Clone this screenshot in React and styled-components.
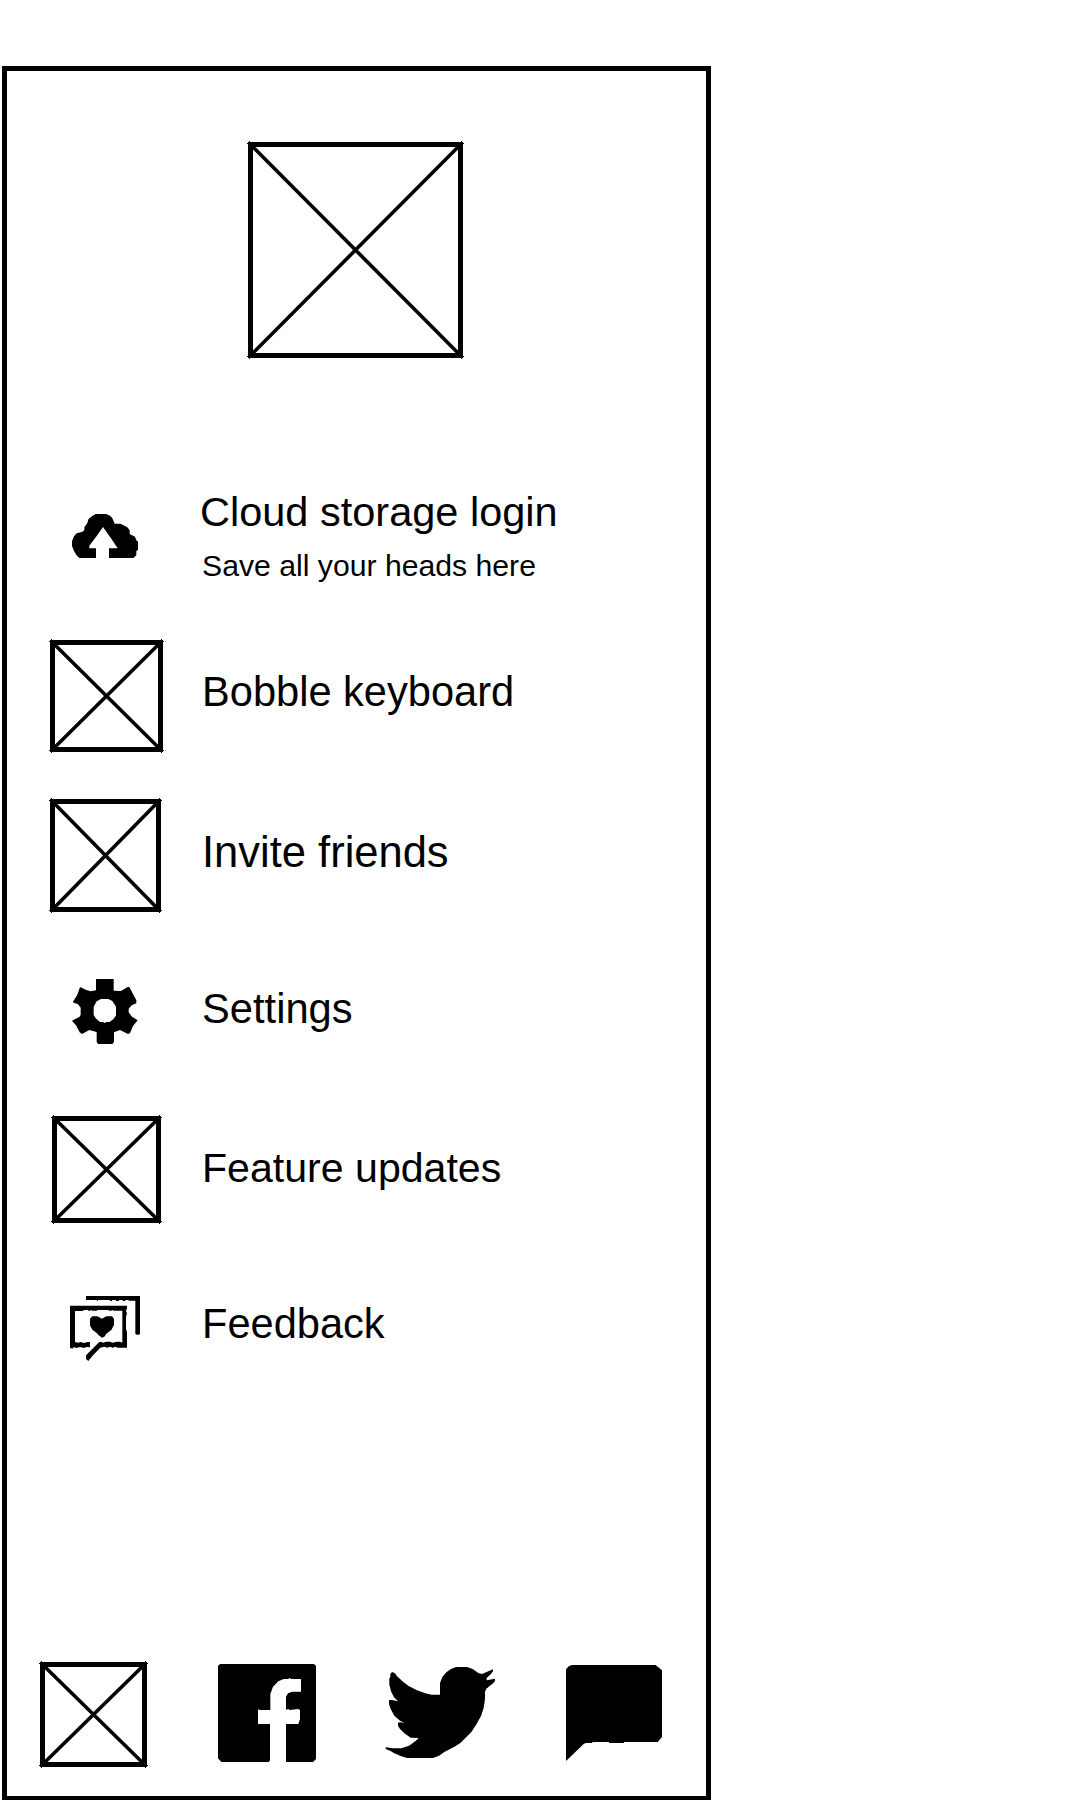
import React from "react";
import styled, { createGlobalStyle } from "styled-components";

const GlobalStyle = createGlobalStyle`
  html, body { margin: 0; background: #fff; }
  body { height: 1800px; overflow: hidden; }
`;

const Page = styled.main`
  box-sizing: border-box;
  height: 1800px;
  padding: 66px 0 0 2px;
  background: #fff;
  color: #000;
  font-family: "Liberation Sans", Arial, sans-serif;
`;

const Drawer = styled.section`
  box-sizing: border-box;
  display: flex;
  flex-direction: column;
  width: 709px;
  height: 1734px;
  border: 5px solid #000;
  border-bottom-width: 4px;
`;

const Hero = styled.header`
  padding: 71px 0 0 241px;
  height: 334px;
`;

const Menu = styled.nav`
  display: flex;
  flex-direction: column;
`;

const MenuRow = styled.div`
  display: grid;
  grid-template-columns: 190px 1fr;
  align-items: start;
  height: 120px;
  margin-bottom: ${(p) => p.$gap}px;
`;

const IconCell = styled.div`
  padding: ${(p) => p.$top}px 0 0 ${(p) => p.$left}px;
`;

const Labels = styled.div`
  padding: ${(p) => p.$top}px 0 0 ${(p) => p.$left}px;
`;

const Title = styled.div`
  font-size: ${(p) => p.$size}px;
  line-height: 48px;
  white-space: nowrap;
`;

const Subtitle = styled.div`
  margin: 6px 0 0 2px;
  font-size: 30.2px;
  line-height: 48px;
  white-space: nowrap;
`;

const Footer = styled.footer`
  display: flex;
  align-items: flex-start;
  margin-top: auto;
  height: 134px;
  padding-left: 33px;
`;

const FooterItem = styled.div`
  padding-top: ${(p) => p.$top}px;
  margin-right: ${(p) => p.$gap}px;
`;

const Drawing = styled.svg`
  display: block;
  overflow: visible;
  shape-rendering: ${(p) => (p.$smooth ? "geometricPrecision" : "crispEdges")};
`;

const Cross = styled.path`
  shape-rendering: geometricPrecision;
  stroke-width: 3.6px;
`;

function Placeholder({ w, h }) {
  return (
    <Drawing width={w} height={h} viewBox={`0 0 ${w} ${h}`} fill="none" stroke="#000">
      <rect x="2.5" y="2.5" width={w - 5} height={h - 5} strokeWidth="5" />
      <Cross d={`M2 2L${w - 2} ${h - 2}M${w - 2} 2L2 ${h - 2}`} />
      <path
        d={`M-1 1.5H2M1.5 -1V2M${w - 2} 1.5H${w + 1}M${w - 1.5} -1V2M-1 ${h - 1.5}H2M1.5 ${h - 2}V${h + 1}M${w - 2} ${h - 1.5}H${w + 1}M${w - 1.5} ${h - 2}V${h + 1}`}
        strokeWidth="1"
      />
    </Drawing>
  );
}

const CloudIcon = () => (
  <Drawing $smooth width="66" height="44" viewBox="36 42 198 132">
    <path d="M58 174L49 165L42 153L36 138V123L42 109L50 100L66 96L73 91V82L82 69L86 56L98 47L107 42H139L151 48L157 55L164 71H182L202 82L209 91V102L225 110L229 121L234 125V150L229 153V166L220 174H147V145H173L154 116L129 81L110 108L88 137V145H108V174Z" />
  </Drawing>
);

const GearIcon = () => (
  <Drawing $smooth width="66" height="65" viewBox="96 57 198 195">
    <path
      fillRule="evenodd"
      d="M168 57H221V92L243 93L263 81H268L289 121V130L275 136L266 146V157L276 170L293 181L279 198L270 219L264 222L240 210L222 217V246L217 252H174L170 246V216L148 210L126 222L119 217L109 197L96 182L119 170L122 164V143L114 133L98 127L112 104L120 81L139 90L152 94L168 91ZM183 117L170 124L161 140V165L167 175L180 186H189L194 189L199 186H208L220 178L228 166V140L217 123L205 117Z"
    />
  </Drawing>
);

const FeedbackIcon = () => (
  <Drawing $smooth width="70" height="65" viewBox="30 33 210 195">
    <path d="M78 33H240V147L233 150L226 147V47H206V45H196V48H188V45H177V48H168V45H156V48H150V45H114V48H111V45H78Z" />
    <path d="M30 62H201V70L198 78L201 86L198 93V133L201 140V188H172L167 185L158 188L150 185L141 188L134 185L121 188L99 211L85 228L78 222V211L117 172L123 170L129 173L138 170H150L158 173L171 170H180L187 173V77H161L157 75L151 78L144 75H111V77H97L93 75L88 78L82 75H73L67 78H45V171L54 173L62 171L71 174L84 171H90V187L79 186L72 189L60 186L48 189L42 186L37 191L30 188Z" />
    <path d="M97 94H112L126 101L139 94H156L162 101V120L154 135L139 146L133 155L126 158L116 151L111 145L98 135L90 122V101Z" />
  </Drawing>
);

const FacebookIcon = () => (
  <Drawing $smooth width="98" height="98" viewBox="54 42 294 294">
    <path d="M60 42H342L348 48V327L339 336H258V222H295L300 207V180L294 177L270 180L264 177L258 180V140L264 130L276 125H303V87H274L269 84L265 87H251L235 94L219 110L211 132V180H180L174 178V222H210V331L206 336H64L54 325V48Z" />
  </Drawing>
);

const TwitterIcon = () => (
  <Drawing $smooth width="109" height="91" viewBox="48 51 327 273">
    <path d="M66 66L75 70L81 79L100 96L116 108L141 121L166 130L185 134H210V99L217 81L229 67L243 57L258 51H291L308 57L325 69L336 72L350 66L369 58V63L363 72L350 84V91L375 86V92L371 98L349 116L345 126V147L341 174L333 198L318 225L304 246L272 278L256 289L223 306L207 317L189 324H111L92 318L73 310L60 302L47 297V292L69 295H94L117 287L136 274L146 264L122 263L103 250L90 237L84 227V218L90 217L103 219L90 212L73 197L62 177L57 162V150H66L84 154L72 142L64 126L58 104V85L61 81V72Z" />
  </Drawing>
);

const ChatIcon = () => (
  <Drawing $smooth width="96" height="96" viewBox="48 45 288 288">
    <path d="M66 45H317L336 61V261L323 276H222V279H177V276H127V279H108L101 282L48 333V58L57 48Z" />
  </Drawing>
);

const items = [
  { title: "Cloud storage login", subtitle: "Save all your heads here", size: 41.5, icon: <CloudIcon />, iconLeft: 65, iconTop: 38, textLeft: 3, textTop: 12, gap: 40 },
  { title: "Bobble keyboard", size: 41.6, icon: <Placeholder w={113} h={112} />, iconLeft: 43, iconTop: 4, textLeft: 5, textTop: 32, gap: 40 },
  { title: "Invite friends", size: 43.5, icon: <Placeholder w={111} h={113} />, iconLeft: 43, iconTop: 3, textLeft: 5, textTop: 32, gap: 36 },
  { title: "Settings", size: 41.7, icon: <GearIcon />, iconLeft: 65, iconTop: 27, textLeft: 5, textTop: 33, gap: 38 },
  { title: "Feature updates", size: 41.1, icon: <Placeholder w={109} h={107} />, iconLeft: 45, iconTop: 6, textLeft: 5, textTop: 34, gap: 31 },
  { title: "Feedback", size: 41.6, icon: <FeedbackIcon />, iconLeft: 63, iconTop: 35, textLeft: 5, textTop: 39, gap: 0 },
];

const links = [
  { icon: <Placeholder w={107} h={105} />, top: 0, gap: 71 },
  { icon: <FacebookIcon />, top: 2, gap: 70 },
  { icon: <TwitterIcon />, top: 5, gap: 71 },
  { icon: <ChatIcon />, top: 3, gap: 0 },
];

export default function App() {
  return (
    <Page>
      <GlobalStyle />
      <Drawer>
        <Hero>
          <Placeholder w={215} h={216} />
        </Hero>
        <Menu>
          {items.map((item) => (
            <MenuRow key={item.title} $gap={item.gap}>
              <IconCell $left={item.iconLeft} $top={item.iconTop}>{item.icon}</IconCell>
              <Labels $left={item.textLeft} $top={item.textTop}>
                <Title $size={item.size}>{item.title}</Title>
                {item.subtitle && <Subtitle>{item.subtitle}</Subtitle>}
              </Labels>
            </MenuRow>
          ))}
        </Menu>
        <Footer>
          {links.map((link, i) => (
            <FooterItem key={i} $top={link.top} $gap={link.gap}>{link.icon}</FooterItem>
          ))}
        </Footer>
      </Drawer>
    </Page>
  );
}
